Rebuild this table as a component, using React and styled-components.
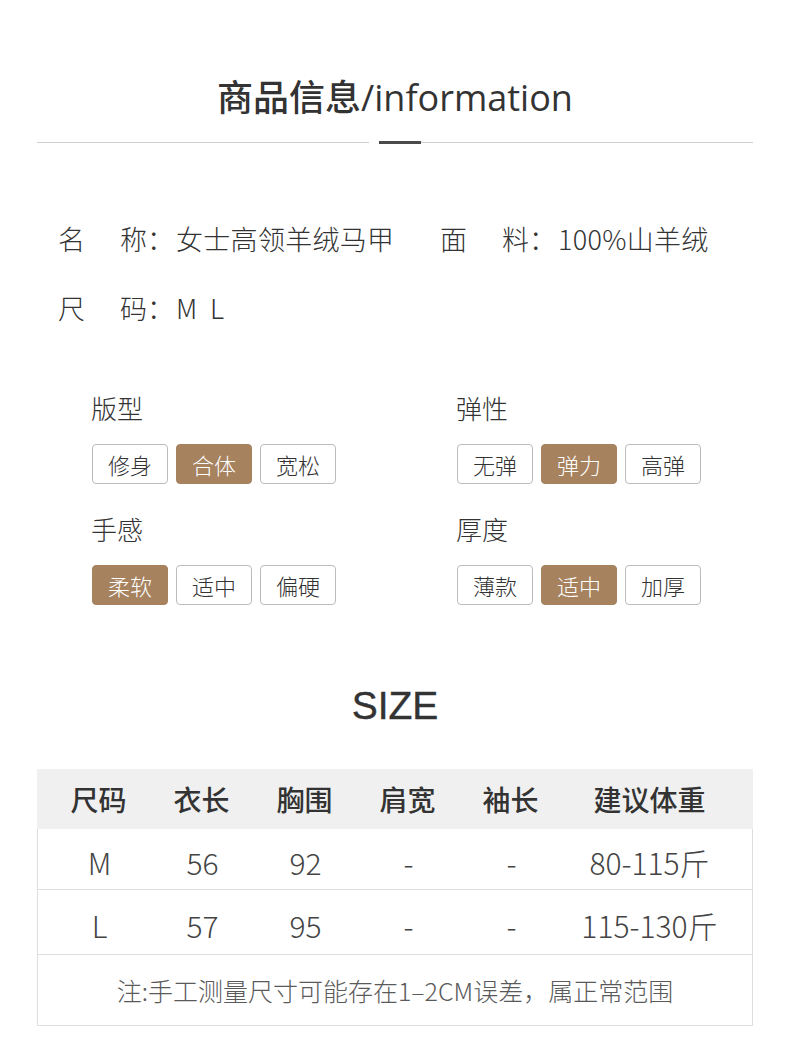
import React from "react";
import styled, { createGlobalStyle } from "styled-components";

const Global = createGlobalStyle`
  html, body { margin: 0; padding: 0; background: #fff; }
  body { font-family: "Noto Sans CJK SC", "Noto Sans", sans-serif; color: #333; }
`;

const Page = styled.div`
  width: 790px;
  padding-top: 76px;
  padding-bottom: 30px;
  box-sizing: border-box;
`;

const Title = styled.h1`
  margin: 0;
  text-align: center;
  font-family: "Open Sans", "Noto Sans CJK SC", sans-serif;
  font-size: 36px;
  font-weight: 500;
  line-height: 43px;
  color: #333;
`;

const Divider = styled.div`
  display: flex;
  align-items: center;
  margin: 22px 37px 0 37px;
  height: 3px;
`;

const Line = styled.div`
  flex: 1;
  height: 1px;
  background: #cfcfcf;
`;

const Bar = styled.div`
  width: 42px;
  height: 3px;
  background: #4a4a4a;
  margin-left: 10px;
`;

const Info = styled.div`
  margin-top: 77px;
  padding-left: 58px;
  display: grid;
  grid-template-columns: 382px 1fr;
  row-gap: 34px;
  font-size: 27px;
  line-height: 35px;
  font-weight: 300;
  color: #333;
`;

const InfoItem = styled.div`
  display: flex;
  align-items: center;
  white-space: nowrap;
`;

const InfoLabel = styled.span`
  display: flex;
  justify-content: space-between;
  width: 89px;
`;

const Colon = styled.span`
  display: inline-block;
  width: 29px;
`;

const Value = styled.span`
  letter-spacing: 0.3px;
`;

const Attrs = styled.div`
  margin-top: 66px;
  padding-left: 92px;
  display: grid;
  grid-template-columns: 365px 1fr;
  row-gap: 28px;
`;

const Attr = styled.div`
  display: flex;
  flex-direction: column;
  gap: 19px;
`;

const AttrLabel = styled.div`
  font-size: 26px;
  line-height: 34px;
  font-weight: 300;
  color: #333;
  margin-left: -1px;
`;

const Tags = styled.div`
  display: flex;
  gap: 8px;
`;

const Tag = styled.div`
  width: 76px;
  height: 40px;
  box-sizing: border-box;
  border: 1px solid ${(p) => (p.$active ? "#a6825f" : "#bcbcbc")};
  border-radius: 4px;
  background: ${(p) => (p.$active ? "#a6825f" : "#fff")};
  color: ${(p) => (p.$active ? "#fff" : "#333")};
  font-size: 22px;
  font-weight: 300;
  display: flex;
  align-items: center;
  justify-content: center;
`;

const SizeTitle = styled.h2`
  margin: 77px 0 0 0;
  text-align: center;
  font-family: "Liberation Sans", Arial, sans-serif;
  font-size: 39px;
  font-weight: 500;
  line-height: 47px;
  color: #333;
  -webkit-text-stroke: 0.4px #333;
`;

const Table = styled.div`
  margin: 40px 37px 0 37px;
  border: 1px solid #dedede;
  border-top: none;
`;

const Row = styled.div`
  display: grid;
  grid-template-columns: repeat(5, 103px) 1fr;
  padding: ${(p) => (p.$head ? "0" : "5px")} 16px 0 10px;
  height: ${(p) => p.$h}px;
  box-sizing: border-box;
  align-items: center;
  background: ${(p) => (p.$head ? "#f0f0f0" : "#fff")};
  border-bottom: ${(p) => (p.$head ? "none" : "1px solid #dedede")};
  margin: ${(p) => (p.$head ? "0 -1px" : "0")};
`;

const Cell = styled.div`
  text-align: center;
  font-size: ${(p) => (p.$head ? "28px" : "30px")};
  font-weight: ${(p) => (p.$head ? 500 : 300)};
  color: ${(p) => (p.$head ? "#333" : "#444")};
  white-space: nowrap;
`;

const Note = styled.div`
  height: 70px;
  display: flex;
  align-items: center;
  justify-content: center;
  font-size: 25px;
  font-weight: 300;
  color: #5a5a5a;
`;

const attrs = [
  { label: "版型", tags: ["修身", "合体", "宽松"], active: 1 },
  { label: "弹性", tags: ["无弹", "弹力", "高弹"], active: 1 },
  { label: "手感", tags: ["柔软", "适中", "偏硬"], active: 0 },
  { label: "厚度", tags: ["薄款", "适中", "加厚"], active: 1 },
];

const head = ["尺码", "衣长", "胸围", "肩宽", "袖长", "建议体重"];
const rows = [
  { cells: ["M", "56", "92", "-", "-", "80-115斤"], h: 61 },
  { cells: ["L", "57", "95", "-", "-", "115-130斤"], h: 65 },
];

export default function App() {
  return (
    <Page>
      <Global />
      <Title>商品信息/information</Title>
      <Divider>
        <Line />
        <Bar />
        <Line />
      </Divider>

      <Info>
        <InfoItem>
          <InfoLabel><span>名</span><span>称</span></InfoLabel>
          <Colon>：</Colon>
          <Value>女士高领羊绒马甲</Value>
        </InfoItem>
        <InfoItem>
          <InfoLabel><span>面</span><span>料</span></InfoLabel>
          <Colon>：</Colon>
          <Value>100%山羊绒</Value>
        </InfoItem>
        <InfoItem>
          <InfoLabel><span>尺</span><span>码</span></InfoLabel>
          <Colon>：</Colon>
          <Value>M&nbsp;&nbsp;L</Value>
        </InfoItem>
      </Info>

      <Attrs>
        {attrs.map((a) => (
          <Attr key={a.label}>
            <AttrLabel>{a.label}</AttrLabel>
            <Tags>
              {a.tags.map((t, i) => (
                <Tag key={t} $active={i === a.active}>{t}</Tag>
              ))}
            </Tags>
          </Attr>
        ))}
      </Attrs>

      <SizeTitle>SIZE</SizeTitle>

      <Table>
        <Row $head $h={60}>
          {head.map((h) => (
            <Cell key={h} $head>{h}</Cell>
          ))}
        </Row>
        {rows.map((r) => (
          <Row key={r.cells[0]} $h={r.h}>
            {r.cells.map((c, i) => (
              <Cell key={i}>{c}</Cell>
            ))}
          </Row>
        ))}
        <Note>注:手工测量尺寸可能存在1–2CM误差，属正常范围</Note>
      </Table>
    </Page>
  );
}
